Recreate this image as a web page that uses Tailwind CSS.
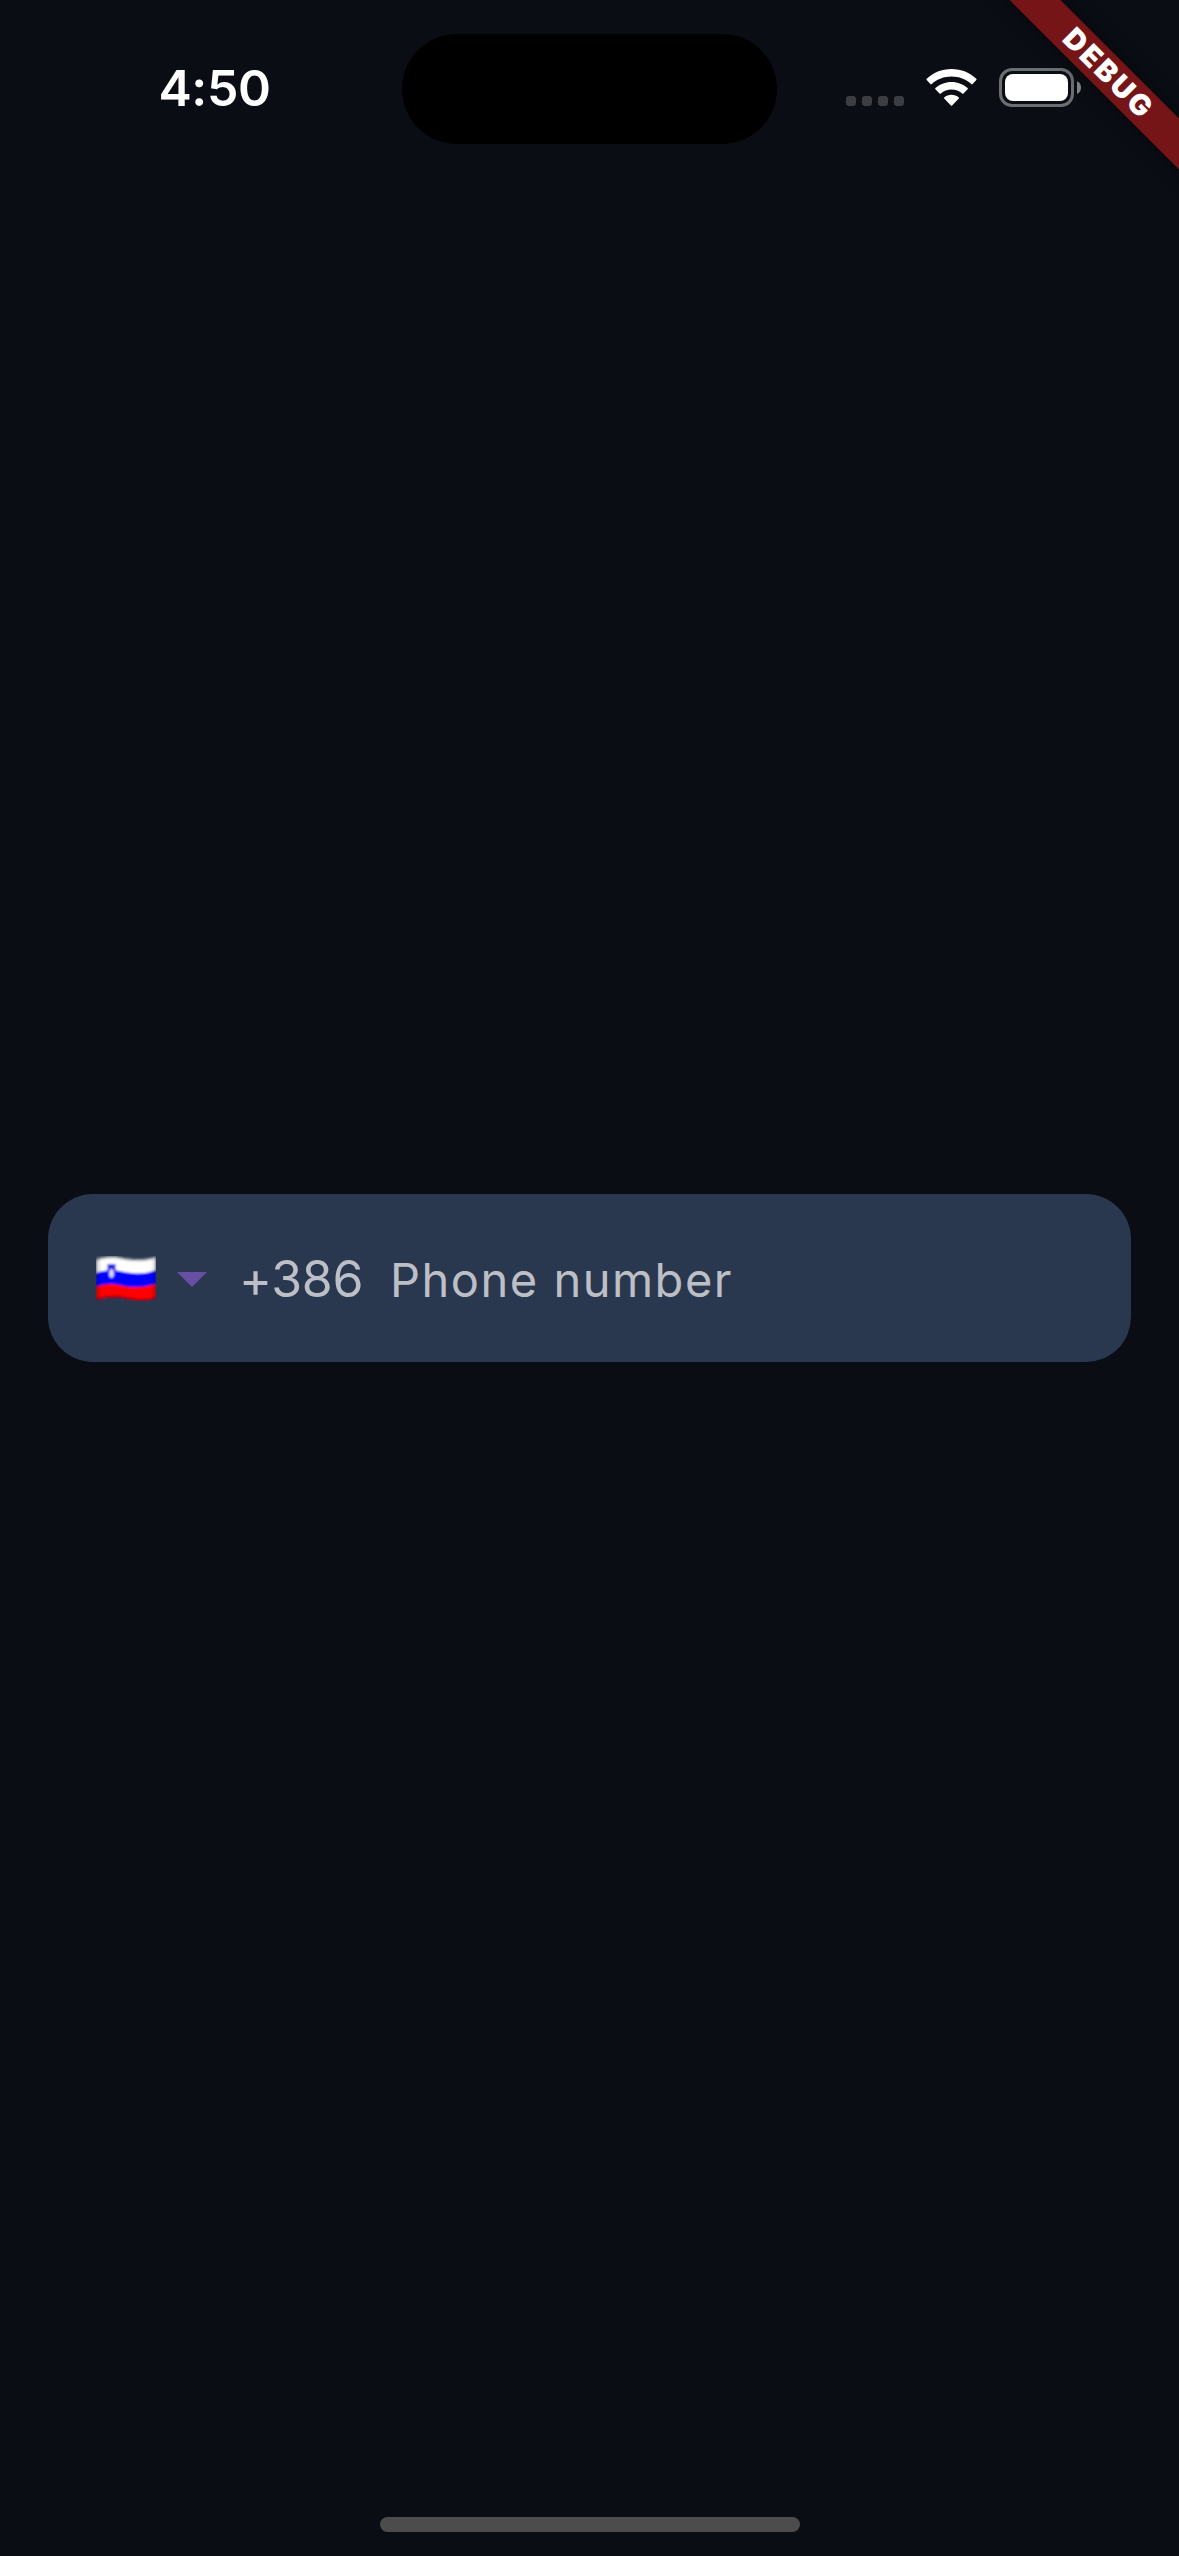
<!DOCTYPE html>
<html lang="en">
<head>
<meta charset="utf-8">
<title>Phone number</title>
<script src="https://cdn.jsdelivr.net/npm/@tailwindcss/browser@4"></script>
</head>
<body class="bg-[#0a0d14]">
<div class="relative flex h-[2556px] w-[1179px] flex-col overflow-hidden bg-[#0a0d14] font-['Inter',sans-serif]">
  <!-- Status bar -->
  <header class="flex h-[177px] shrink-0 items-start pt-[34px]">
    <div class="flex w-[402px] justify-center pt-[24px] pl-[27px] text-[50px] leading-[60px] font-semibold tracking-[-0.4px] text-white"><span>4:50</span></div>
    <div class="h-[110px] w-[375px] rounded-full bg-black"></div>
    <div class="flex h-[73px] flex-1 items-end pl-[69px]">
      <div class="mb-px flex gap-[6px]">
        <span class="size-[10px] rounded-[3px] bg-[#3c3d42]"></span>
        <span class="size-[10px] rounded-[3px] bg-[#3c3d42]"></span>
        <span class="size-[10px] rounded-[3px] bg-[#3c3d42]"></span>
        <span class="size-[10px] rounded-[3px] bg-[#3c3d42]"></span>
      </div>
      <svg class="mb-px ml-[22px]" width="51" height="37" viewBox="0 0 51 37" fill="#fff">
        <path d="M25.5 0C35.200 0 44 3.700 50.300 9.800Q50.900 10.500 50.300 11.100L46.600 15.100Q46 15.700 45.300 15.100C40 10.300 33 7.600 25.500 7.600S11 10.300 5.700 15.100Q5 15.700 4.400 15.100L.700 11.100Q.100 10.500 .700 9.800C7 3.700 15.800 0 25.500 0Z"/>
        <path d="M25.500 12.900C31.700 12.900 37.300 15.200 41.600 19.100Q42.200 19.700 41.600 20.300L37.500 24.400Q36.900 25 36.200 24.400C33.300 21.900 29.600 20.500 25.500 20.500S17.700 21.900 14.800 24.400Q14.100 25 13.500 24.400L9.400 20.300Q8.800 19.700 9.400 19.100C13.700 15.200 19.300 12.900 25.500 12.900Z"/>
        <path d="M25.500 25.700C28.300 25.700 30.800 26.700 32.800 28.400Q33.400 29 32.800 29.600L26.100 36.400Q25.500 37 24.900 36.400L18.200 29.600Q17.600 29 18.200 28.400C20.200 26.700 22.700 25.700 25.500 25.700Z"/>
      </svg>
      <svg class="ml-[22px]" width="84" height="39" viewBox="0 0 84 39">
        <rect x="1.500" y="1.500" width="72" height="36" rx="11.500" fill="none" stroke="#6d6e72" stroke-width="3"/>
        <rect x="6" y="6" width="63" height="27" rx="8" fill="#fff"/>
        <path d="M78 13.300C80.500 14.300 82 16.500 82 19.500S80.500 25 78 26Z" fill="#85868a"/>
      </svg>
    </div>
  </header>

  <!-- Phone field -->
  <main class="flex flex-1 flex-col px-12 pt-[1017px]">
    <div class="flex h-[168px] items-center rounded-[45px] bg-[#2a384f] pl-12 text-[#bdbfc7]">
      <svg width="60" height="45" viewBox="0 0 60 45">
        <defs>
          <filter id="soft" x="0" y="0" width="1" height="1"><feGaussianBlur stdDeviation=".8"/></filter>
          <linearGradient id="shade" x1="0" x2="1" y1="0" y2="0">
            <stop offset="0" stop-color="#000" stop-opacity=".25"/>
            <stop offset=".09" stop-color="#000" stop-opacity="0"/>
            <stop offset=".92" stop-color="#000" stop-opacity="0"/>
            <stop offset="1" stop-color="#000" stop-opacity=".2"/>
          </linearGradient>
          <clipPath id="wave"><path d="M0 3C8 0 17-.5 26 1.500S48 4.500 60 .5V42.500C52 45.500 43 46 33 43.500S12 40.500 0 44.500Z"/></clipPath>
        </defs>
        <g filter="url(#soft)">
          <g clip-path="url(#wave)">
            <rect width="60" height="45" fill="#fff"/>
            <path d="M0 3C8 0 17-.5 26 1.500S48 4.500 60 .5" fill="none" stroke="#a9acb2" stroke-width="4"/>
            <path d="M0 17C8 14 17 13.500 26 15.500S48 19 60 14V45H0Z" fill="#00f"/>
            <path d="M0 30.500C8 27.500 17 27 26 29.500S48 31.500 60 28V45H0Z" fill="#f00"/>
            <path d="M0 44.500C12 40.500 23 41 33 43.500S52 45.500 60 42.500" fill="none" stroke="#a30008" stroke-width="4"/>
            <rect width="60" height="45" fill="url(#shade)"/>
          </g>
          <path d="M11.500 8H19.500V16C19.500 19.500 17.500 21.500 15.500 22.500C13.500 21.500 11.500 19.500 11.500 16Z" fill="#2b22e8"/>
          <path d="M13.300 15L15.500 12.500L17.700 15V20L15.500 22L13.300 20Z" fill="#dcdcff"/>
        </g>
      </svg>
      <svg class="ml-[21px] mt-[3px]" width="30" height="15" viewBox="0 0 30 15"><path d="M0 0H30L15 15Z" fill="#6750a4"/></svg>
      <span class="mt-px ml-[32px] w-[125px] text-[50px] leading-[60px] font-normal tracking-[-0.3px] whitespace-nowrap">+386</span>
      <span class="mt-[4px] ml-[26px] text-[47px] leading-[60px] font-normal tracking-[1.5px] whitespace-nowrap">Phone number</span>
    </div>
  </main>

  <!-- Home indicator -->
  <footer class="flex justify-center pb-6"><div class="h-[15px] w-[420px] rounded-full bg-[#4c4c4c]"></div></footer>

  <!-- Debug ribbon -->
  <div class="absolute top-[54px] left-[957px] flex h-[36px] w-[300px] rotate-45 items-center justify-center bg-[#751517] pl-[5px] text-[29px] leading-[36px] font-black tracking-[2.8px] text-white shadow-[0_0_18px_rgba(0,0,0,0.5)]"><span>DEBUG</span></div>
</div>
</body>
</html>
